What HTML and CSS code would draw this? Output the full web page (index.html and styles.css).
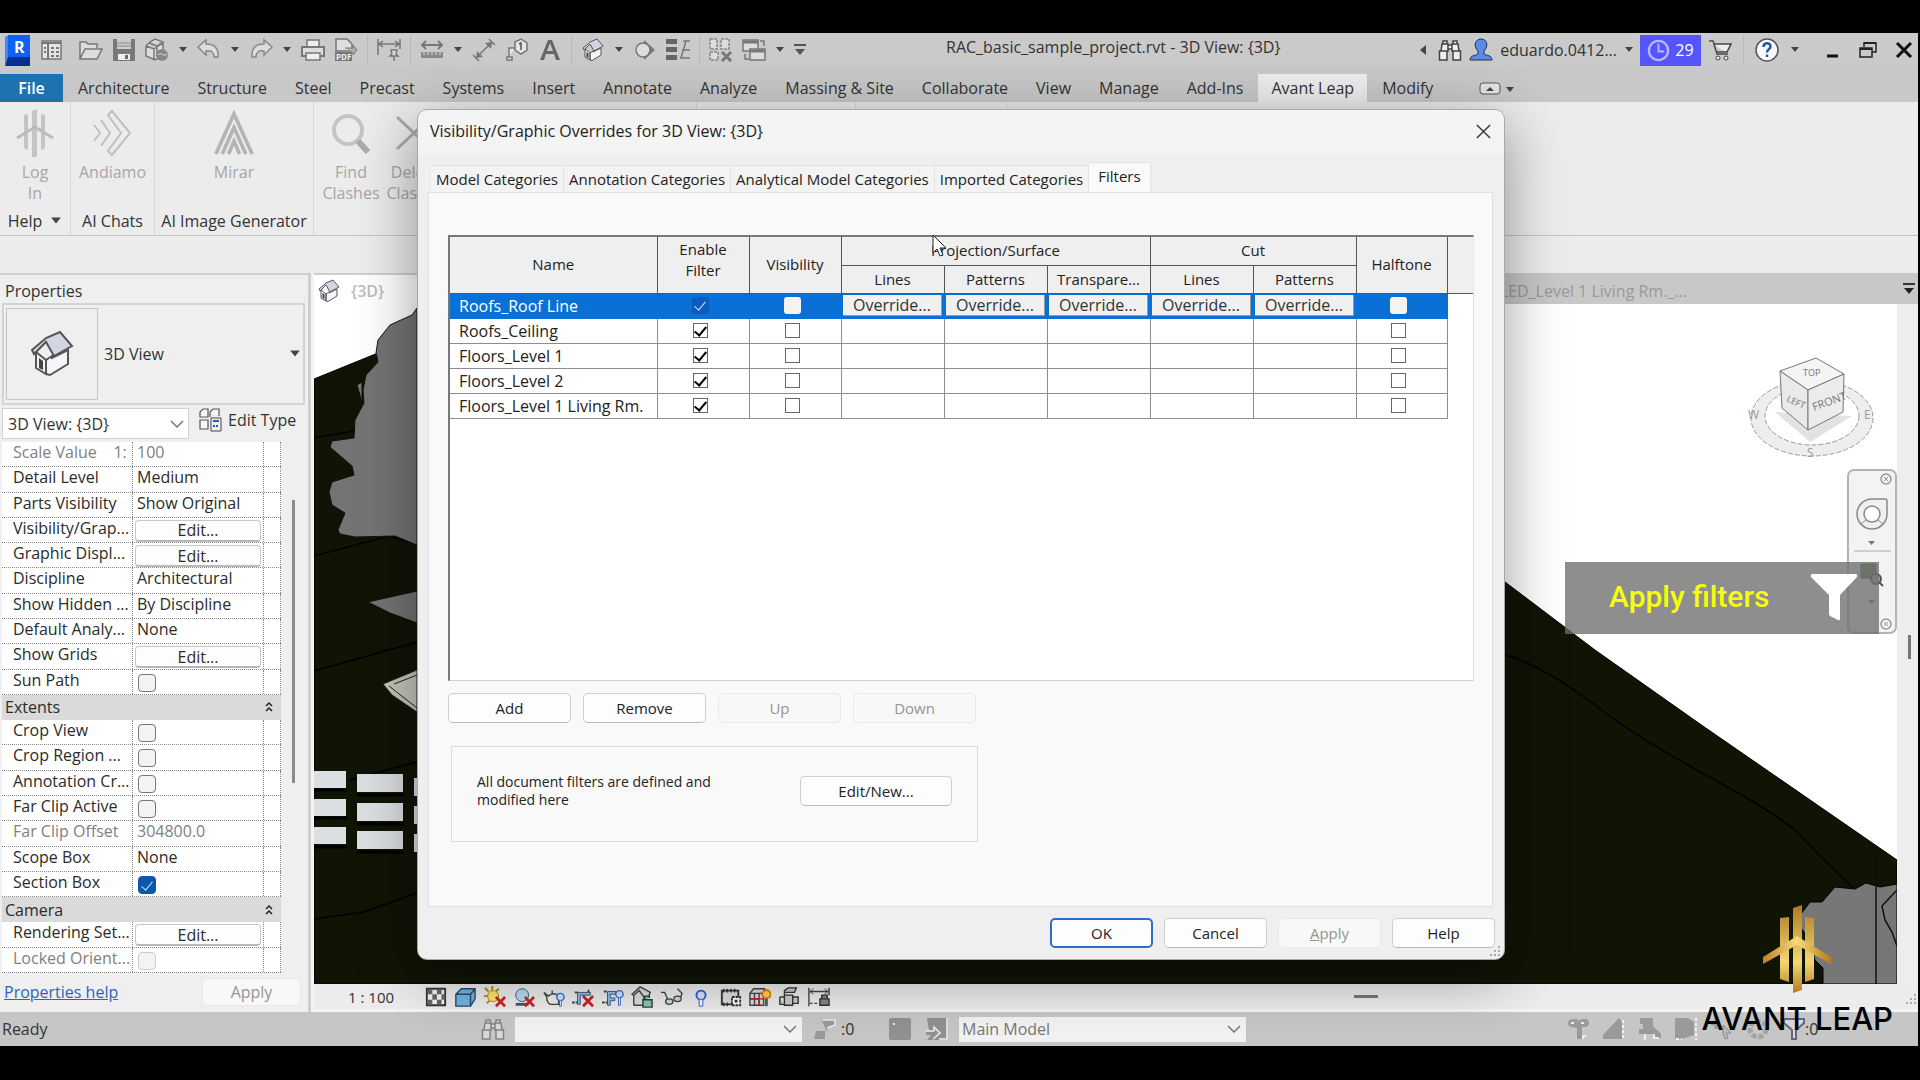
FILE: index.html
```html
<!DOCTYPE html>
<html lang="en">
<head>
    <meta charset="UTF-8">
    <meta name="viewport" content="width=device-width, initial-scale=1.0">
    <title>RAC_basic_sample_project.rvt - 3D View: {3D}</title>
    <link rel="stylesheet" href="styles.css">
</head>
<body>
    <!-- shared icons -->
    <svg class="defs" aria-hidden="true">
        <symbol id="i-house" viewBox="0 0 24 24">
            <path d="M4 11l5 4v7l-5-3zM9 15l3-2v1l8-4v7l-9 5.500-2-.5z" fill="#f4f5f8" stroke="#555" stroke-width="1"/>
            <path d="M2 10l7-6 7-3 6 7-9 5-4-7-6 6z" fill="#d3d6e2" stroke="#555" stroke-width="1"/>
            <path d="M5.500 14l2 1.500V20l-2-1z" fill="#444"/>
        </symbol>
        <symbol id="i-binoc" viewBox="0 0 24 24">
            <path d="M5 3h4v3H5zM15 3h4v3h-4zM4 6h6v7H3zM14 6h6l1 7h-7zM10 7h4v4h-4zM1.500 13H9v9H1.500zM15 13h7.500v9H15z" fill="#eee" stroke="#444" stroke-width="1.500"/>
        </symbol>
        <symbol id="i-caret" viewBox="0 0 10 6"><path d="M1 0h8L5 5z" fill="#444"/></symbol>
        <symbol id="i-chev" viewBox="0 0 14 8"><path d="M1 1l6 6 6-6" fill="none" stroke="#777" stroke-width="1.500"/></symbol>
        <symbol id="i-up" viewBox="0 0 8 12"><path d="M1 5l3-3 3 3M1 10l3-3 3 3" fill="none" stroke="#222" stroke-width="1.500"/></symbol>
    </svg>

    <div class="app">
        <header class="titlebar">
            <div class="quick">
                <svg class="logo" viewBox="0 0 27 31"><path d="M2 2l4-2v25l-4 5z" fill="#4a86f0"/><path d="M5 0h22v22H5z" fill="#0b62f5"/><path d="M5 22h22v9H2z" fill="#06308f"/><text x="11" y="18" class="logo-r">R</text></svg>
                <svg class="ic home" viewBox="0 0 24 24"><path d="M3 3h19v18H3z" fill="#e4e4e4" stroke="#777" stroke-width="1.500"/><path d="M3 5h19M9 5v16" stroke="#777" stroke-width="2"/><path d="M12 10h3M12 14h3M12 18h3M17 10h3M17 14h3M17 18h3M5 10h2M5 14h2" stroke="#777" stroke-width="2"/></svg>
                <svg class="ic" viewBox="0 0 24 24"><path d="M1 21V4h6l2 2h9v4M1 21l5-10h17l-5 10z" fill="#ddd" stroke="#777" stroke-width="1.500"/></svg>
                <svg class="ic" viewBox="0 0 24 24"><path d="M1 1h22v22H1z" fill="#777"/><path d="M5 1h14v10H5z" fill="#ccc"/><path d="M5 5h14M5 8h14" stroke="#888"/><path d="M6 16h12v6H6z" fill="#eee"/><path d="M13 17h3v4h-3z" fill="#666"/></svg>
                <svg class="ic" viewBox="0 0 24 24"><path d="M1 8l4-4 5-3 8 3v13l-8 5-9-4zM1 8l8 3 9-6M9 11v11M4 5l8 3 6-4M12 8v10" fill="#ddd" stroke="#777" stroke-width="1.500"/><circle cx="17" cy="17" r="6" fill="#888"/><path d="M13 17c3-4 6 3 9-1" stroke="#ddd" fill="none"/></svg>
                <svg class="caret"><use href="#i-caret"/></svg>
                <svg class="ic" viewBox="0 0 24 24"><path d="M1 9l8-7v4c9 0 13 5 12 13h-4c0-5-3-7-8-6v4z" fill="#ddd" stroke="#888" stroke-width="1.500"/></svg>
                <svg class="caret"><use href="#i-caret"/></svg>
                <svg class="ic" viewBox="0 0 24 24"><path d="M23 9l-8-7v4C6 6 2 11 3 19h4c0-5 3-7 8-6v4z" fill="#ddd" stroke="#888" stroke-width="1.500"/></svg>
                <svg class="caret"><use href="#i-caret"/></svg>
                <svg class="ic" viewBox="0 0 24 24"><path d="M6 9V2h12v7" fill="#eee" stroke="#777" stroke-width="1.500"/><path d="M1 9h22v9H1z" fill="#ddd" stroke="#777" stroke-width="2"/><path d="M5 15h14v7H5z" fill="#eee" stroke="#777" stroke-width="1.500"/></svg>
                <svg class="ic" viewBox="0 0 24 24"><path d="M2 1h11l5 5v7H2z" fill="#ddd" stroke="#777" stroke-width="1.500"/><path d="M11 10h8V7l4 5-4 5v-3" fill="#aaa" stroke="#777"/><path d="M1 14h17v9H1z" fill="#777"/><text x="2" y="22" class="pdf">PDF</text></svg>
                <i class="sep"></i>
                <svg class="ic" viewBox="0 0 24 24"><path d="M1 1v16M23 1v10M2 6h20M6 3L2 6l4 3M18 3l4 3-4 3" fill="none" stroke="#777" stroke-width="1.500"/><path d="M14 12h6l-1 4 2 2h-8l2-2zM17 18v5" fill="#ddd" stroke="#777" stroke-width="1.500"/></svg>
                <i class="sep"></i>
                <svg class="ic" viewBox="0 0 24 24"><path d="M2 7h20M6 3L2 7l4 4M18 3l4 4-4 4" fill="none" stroke="#777" stroke-width="2"/><path d="M1 14h22v6H1z" fill="#888"/><path d="M4 14v3M8 14v3M12 14v3M16 14v3M20 14v3" stroke="#ddd"/></svg>
                <svg class="caret"><use href="#i-caret"/></svg>
                <svg class="ic" viewBox="0 0 24 24"><path d="M4 20L20 4M17 1l6 6M1 17l6 6" stroke="#777" stroke-width="1.500"/><path d="M4 20l1-7 6 6zM20 4l-7 1 6 6z" fill="#777"/></svg>
                <svg class="ic" viewBox="0 0 24 24"><path d="M10 4l6-3 6 4v7l-6 4-6-4zM10 10H4v9M2 19h5v3H2z" fill="#e6e6e6" stroke="#777" stroke-width="1.500"/><path d="M14 6l2-1v7" fill="none" stroke="#555" stroke-width="1.500"/></svg>
                <svg class="ic" viewBox="0 0 24 24"><path d="M2 22L10 2h4l8 20h-4l-2-6H8l-2 6zM9 13h6l-3-8z" fill="#666" fill-rule="evenodd"/></svg>
                <i class="sep"></i>
                <svg class="ic"><use href="#i-house"/></svg>
                <svg class="caret"><use href="#i-caret"/></svg>
                <svg class="ic" viewBox="0 0 24 24"><path d="M11 2l11 10-11 10z" fill="#777"/><circle cx="10" cy="12" r="7" fill="#ddd" stroke="#777" stroke-width="1.500"/></svg>
                <svg class="ic" viewBox="0 0 24 24"><path d="M0 1h11v5H0zM0 9h11v5H0zM0 17h11v5H0z" fill="#666"/><path d="M15 20L20 3M17 3h7M16 12h8M14 20h10" stroke="#777" stroke-width="1.500"/></svg>
                <i class="sep"></i>
                <svg class="ic" viewBox="0 0 24 24"><path d="M1 1h7v10H1zM12 1h8v10h-8zM1 14h8v8H1z" fill="#ddd" stroke="#888" stroke-dasharray="3 1" stroke-width="1.500"/><path d="M13 14l9 9M22 14l-9 9" stroke="#777" stroke-width="3"/></svg>
                <svg class="ic" viewBox="0 0 24 24"><path d="M1 2h15v11H1zM8 11h15v11H8z" fill="#ddd" stroke="#777" stroke-width="1.500"/><path d="M1 4h15M8 13h15" stroke="#777" stroke-width="3"/><path d="M18 3h4v5M3 16v5h4" fill="none" stroke="#777" stroke-width="1.500"/></svg>
                <svg class="caret"><use href="#i-caret"/></svg>
                <svg class="more" viewBox="0 0 12 12"><path d="M0 1h12" stroke="#555" stroke-width="2"/><path d="M1 5h10l-5 6z" fill="#555"/></svg>
            </div>
            <div class="doc-title">RAC_basic_sample_project.rvt - 3D View: {3D}</div>
            <div class="account">
                <svg class="left" viewBox="0 0 6 10"><path d="M6 0v10L0 5z" fill="#444"/></svg>
                <svg class="ic"><use href="#i-binoc"/></svg>
                <svg class="ic" viewBox="0 0 24 24"><path d="M1 22c0-5 5-4 8-6v-3C4 8 6 1 12 1s8 7 3 12v3c3 2 8 1 8 6z" fill="#5b8bea" stroke="#234" stroke-width="1"/></svg>
                <span>eduardo.0412...</span>
                <svg class="caret"><use href="#i-caret"/></svg>
            </div>
            <div class="trial"><svg viewBox="0 0 24 24"><circle cx="12" cy="12" r="10" fill="none" stroke="#b9b6ff" stroke-width="2.500"/><path d="M12 5v8h6" fill="none" stroke="#b9b6ff" stroke-width="2"/></svg>29</div>
            <div class="wincontrols">
                <svg class="ic" viewBox="0 0 24 24"><path d="M1 3h4l4 13h11M6 6h17l-4 8H8" fill="#eee" stroke="#444" stroke-width="1.500"/><circle cx="10" cy="20" r="2" fill="#eee" stroke="#444"/><circle cx="18" cy="20" r="2" fill="#eee" stroke="#444"/></svg>
                <i class="sep"></i>
                <svg class="ic" viewBox="0 0 24 24"><circle cx="12" cy="12" r="11" fill="#fafafa" stroke="#555" stroke-width="1.500"/><path d="M8.500 9c0-5 7-5 7-.5 0 3-3.500 2.500-3.500 6M12 16.500v2.500" fill="none" stroke="#2456b0" stroke-width="2.500"/></svg>
                <svg class="caret"><use href="#i-caret"/></svg>
                <div class="wins">
                    <button class="win" aria-label="Minimize"><svg viewBox="0 0 18 18"><path d="M4 15h11" stroke="#111" stroke-width="3"/></svg></button>
                    <button class="win" aria-label="Restore"><svg viewBox="0 0 18 18"><path d="M5 6V2h12v9h-4M1 7h12v9H1z" fill="none" stroke="#222" stroke-width="1.500"/><path d="M5 2h12M1 8h12" stroke="#222" stroke-width="2"/></svg></button>
                    <button class="win" aria-label="Close"><svg viewBox="0 0 18 18"><path d="M2 2l14 14M16 2L2 16" stroke="#111" stroke-width="3"/></svg></button>
                </div>
            </div>
        </header>

        <nav class="tabs">
            <button class="tab file">File</button>
            <button class="tab">Architecture</button>
            <button class="tab">Structure</button>
            <button class="tab">Steel</button>
            <button class="tab">Precast</button>
            <button class="tab">Systems</button>
            <button class="tab">Insert</button>
            <button class="tab">Annotate</button>
            <button class="tab">Analyze</button>
            <button class="tab">Massing &amp; Site</button>
            <button class="tab">Collaborate</button>
            <button class="tab">View</button>
            <button class="tab">Manage</button>
            <button class="tab">Add-Ins</button>
            <button class="tab current">Avant Leap</button>
            <button class="tab">Modify</button>
            <svg class="cycle" viewBox="0 0 36 14"><rect x="1" y="1" width="20" height="11" rx="3" fill="#e4e4e4" stroke="#555"/><path d="M7 9h8l-4-4zM27 5h8l-4 5z" fill="#444"/></svg>
        </nav>

        <section class="ribbon">
            <div class="panel help">
                <button class="tool"><svg viewBox="0 0 40 48"><path d="M17 2l5-2v48h-5zM9 6l4-1v36l-4-2zM26 5l4 1v33l-4 2z" fill="#c4c4c4"/><path d="M2 29l18-11 18 11" fill="none" stroke="#bbb" stroke-width="3"/></svg>Log<br>In</button>
                <div class="panel-name">Help <svg class="caret big"><use href="#i-caret"/></svg></div>
            </div>
            <div class="panel chats">
                <button class="tool"><svg viewBox="0 0 40 48"><path d="M1 16l6 8-6 8M8 11l9 13-9 13" fill="none" stroke="#c0c0c0" stroke-width="2"/><path d="M15 6l4-4 18 22-18 22-4-4 13-18z" fill="none" stroke="#c0c0c0" stroke-width="2"/></svg>Andiamo</button>
                <div class="panel-name">AI Chats</div>
            </div>
            <div class="panel images">
                <button class="tool"><svg viewBox="0 0 44 48"><path d="M2 47L22 3l20 44M9 47l13-29 13 29M16 47l6-14 6 14" fill="none" stroke="#b4b4b4" stroke-width="4"/></svg>Mirar</button>
                <div class="panel-name">AI Image Generator</div>
            </div>
            <div class="panel clashes">
                <button class="tool"><svg viewBox="0 0 40 48"><circle cx="17" cy="21" r="14" fill="none" stroke="#c4c4c4" stroke-width="4"/><path d="M27 32l10 11" stroke="#aaa" stroke-width="6"/></svg>Find<br>Clashes</button>
                <button class="tool"><svg viewBox="0 0 40 48"><path d="M2 8l34 32M36 8L2 40" stroke="#aaa" stroke-width="3"/></svg>Delete<br>Clashes</button>
            </div>
            <div class="panel blank-a"></div>
            <div class="panel blank-b"></div>
        </section>
        <div class="options"></div>

        <main class="work">
            <aside class="props">
                <h2 class="props-title">Properties</h2>
                <div class="type">
                    <div class="thumb"><svg><use href="#i-house"/></svg></div>
                    <span>3D View</span>
                    <svg class="caret big"><use href="#i-caret"/></svg>
                </div>
                <div class="instance">
                    <div class="combo">
                        <select aria-label="Instance"><option>3D View: {3D}</option></select>
                        <svg class="chev"><use href="#i-chev"/></svg>
                    </div>
                    <button class="edit-type"><svg viewBox="0 0 24 24"><path d="M2 4l3-3h5v8H2zM12 4l3-3h6v7M2 12h8v9H2zM12 9V4" fill="#f6f6f6" stroke="#555" stroke-width="1.200"/><path d="M13 10h10v13H13z" fill="#f2f2f6" stroke="#444"/><path d="M15 13h6M15 18h2M18 18h2" stroke="#2a5aa8" stroke-width="2"/></svg>Edit Type</button>
                </div>
                <div class="grid-wrap">
                    <div class="grid">
                        <div class="row off"><span class="k">Scale Value &nbsp; &nbsp;1:</span><span class="v">100</span><i></i></div>
                        <div class="row"><span class="k">Detail Level</span><span class="v">Medium</span><i></i></div>
                        <div class="row"><span class="k">Parts Visibility</span><span class="v">Show Original</span><i></i></div>
                        <div class="row"><span class="k">Visibility/Grap...</span><span class="v"><button class="edit">Edit...</button></span><i></i></div>
                        <div class="row"><span class="k">Graphic Displ...</span><span class="v"><button class="edit">Edit...</button></span><i></i></div>
                        <div class="row"><span class="k">Discipline</span><span class="v">Architectural</span><i></i></div>
                        <div class="row"><span class="k">Show Hidden ...</span><span class="v">By Discipline</span><i></i></div>
                        <div class="row"><span class="k">Default Analy...</span><span class="v">None</span><i></i></div>
                        <div class="row"><span class="k">Show Grids</span><span class="v"><button class="edit">Edit...</button></span><i></i></div>
                        <div class="row"><label class="k" for="sun">Sun Path</label><span class="v"><input type="checkbox" class="soft" id="sun"></span><i></i></div>
                        <div class="row group"><span>Extents</span><svg class="up"><use href="#i-up"/></svg></div>
                        <div class="row"><label class="k" for="crop">Crop View</label><span class="v"><input type="checkbox" class="soft" id="crop"></span><i></i></div>
                        <div class="row"><label class="k" for="region">Crop Region ...</label><span class="v"><input type="checkbox" class="soft" id="region"></span><i></i></div>
                        <div class="row"><label class="k" for="anno">Annotation Cr...</label><span class="v"><input type="checkbox" class="soft" id="anno"></span><i></i></div>
                        <div class="row"><label class="k" for="far">Far Clip Active</label><span class="v"><input type="checkbox" class="soft" id="far"></span><i></i></div>
                        <div class="row off"><span class="k">Far Clip Offset</span><span class="v">304800.0</span><i></i></div>
                        <div class="row"><span class="k">Scope Box</span><span class="v">None</span><i></i></div>
                        <div class="row"><label class="k" for="section">Section Box</label><span class="v"><input type="checkbox" class="soft" id="section" checked></span><i></i></div>
                        <div class="row group"><span>Camera</span><svg class="up"><use href="#i-up"/></svg></div>
                        <div class="row"><span class="k">Rendering Set...</span><span class="v"><button class="edit">Edit...</button></span><i></i></div>
                        <div class="row off"><label class="k" for="locked">Locked Orient...</label><span class="v"><input type="checkbox" class="soft" id="locked" disabled></span><i></i></div>
                    </div>
                    <div class="thumb-bar"></div>
                </div>
                <div class="props-foot">
                    <a href="#">Properties help</a>
                    <button class="btn" disabled>Apply</button>
                </div>
            </aside>

            <section class="view">
                <div class="doctabs">
                    <div class="doctab"><svg class="ic"><use href="#i-house"/></svg><span>{3D}</span></div>
                    <div class="doctab-off">LED_Level 1 Living Rm._...</div>
                    <svg class="more" viewBox="0 0 12 12"><path d="M0 1h12" stroke="#333" stroke-width="2"/><path d="M1 5h10l-5 6z" fill="#222"/></svg>
                </div>
                <div class="canvas-row">
                    <div class="canvas">
                        <svg class="scene" viewBox="314 304 1583 680" preserveAspectRatio="none">
                            <path d="M314 304h1583v680H314z" fill="#fff"/>
                            <path d="M314 379L378 353 900 320 1420 520 1505 582 1595 650 1700 724 1897 860V984H314z" fill="#101405" stroke="#000"/>
                            <path d="M314 438l40-7M314 556l75-20 28 8M314 671l103-29M314 919l50-7 53-19M350 780l67-18M1505 655c20 5 50 20 90 50 70 55 150 85 200 125l25 26 33 32" fill="none" stroke="#000" stroke-width="1.500"/>
                            <path d="M417 308l-5 7-22 10-12 15-2 13 2 9-12 13-3 15 1 13-9 17-1 18-22 3-2 6 22 19 2 9-22 7-3 10 3 13 13 8-7 17 2 4 15 3 40-1 22 9zM357 385l5-3v20zM368 602l49-11v32l-27-10z" fill="#747474" stroke="#111"/>
                            <path d="M383 684l34-14v42l-25-17z" fill="#c5c9ba" stroke="#222"/>
                            <path d="M389 686l28 22M394 684l23-9" stroke="#222"/>
                            <path d="M314 771h32v17h-32zM314 799h32v17h-32zM314 827h32v17h-32zM357 774h46v18h-46zM357 803h46v18h-46zM357 831h46v18h-46zM414 778h6v18h-6zM414 806h6v18h-6zM414 834h6v18h-6z" fill="#dcdfe2"/>
                            <path d="M314 790h33M314 818h33M314 847h33M357 795h47M357 824h47M357 852h47" stroke="#000" stroke-width="3"/>
                            <path d="M1801 914l9-12 12 0 13-15 20 2 11-6 14 4 17-3v100h-74l0-16-8-8-5-20-9-12z" fill="#777" stroke="#000"/>
                            <path d="M1876 855v129M1897 890l-15 16 3 14 7 12 5 14" fill="none" stroke="#111" stroke-width="1.500"/>
                        </svg>
                        <svg class="cube" viewBox="1744 354 134 108">
                            <ellipse cx="1812" cy="418" rx="61" ry="38" fill="#eee" stroke="#999" stroke-dasharray="5 2"/>
                            <ellipse cx="1812" cy="416" rx="47" ry="29" fill="#fff" stroke="#999" stroke-dasharray="5 2"/>
                            <path d="M1775 412l35 30 42-26z" fill="#e2e2e2"/>
                            <path d="M1780 371l36-13 28 16-36 16z" fill="#f4f4f4" stroke="#777"/>
                            <path d="M1780 371l28 19v40l-26-22z" fill="#e9e9e9" stroke="#777"/>
                            <path d="M1808 390l36-16-1 38-35 18z" fill="#ececec" stroke="#777"/>
                            <text x="1803" y="376" class="face">TOP</text>
                            <text x="1786" y="401" class="face" transform="rotate(24 1786 401)">LEFT</text>
                            <text x="1814" y="411" class="face front" transform="rotate(-20 1814 411)">FRONT</text>
                            <text x="1748" y="419" class="face dir">W</text>
                            <text x="1864" y="419" class="face dir">E</text>
                            <text x="1807" y="457" class="face dir">S</text>
                        </svg>
                        <div class="navbar">
                            <svg viewBox="2 2 46 161">
                                <circle cx="39" cy="10" r="5" fill="none" stroke="#999" stroke-width="1.500"/><path d="M37 8l4 4M41 8l-4 4" stroke="#999"/>
                                <path d="M25 30h13q2 0 2 2v13a15 15 0 1 1-15-15z" fill="#f0f0f0" stroke="#888" stroke-width="1.500"/><circle cx="25" cy="45" r="8" fill="#fff" stroke="#888" stroke-width="1.500"/><path d="M14 55l5-4M36 55l-5-4" stroke="#888"/>
                                <path d="M21 72h7l-3.500 4zM21 131h7l-3.500 4z" fill="#777"/><path d="M7 82h37" stroke="#aaa"/>
                                <path d="M14 95h15v14H14z" fill="#5f8a4f" stroke="#555"/><circle cx="29" cy="110" r="5" fill="#aaa" stroke="#555" stroke-width="2"/><path d="M32 113l4 4" stroke="#555" stroke-width="2"/>
                                <circle cx="39" cy="155" r="5" fill="none" stroke="#999" stroke-width="1.500"/><path d="M37 154h4M37 156h4" stroke="#999"/>
                            </svg>
                        </div>
                        <div class="banner">
                            <span>Apply filters</span>
                            <svg viewBox="0 0 48 48"><path d="M2 1h44q2 1 1 3L30 22v24q0 2-2 1l-8-4q-1-1-1-2V22L1 4Q0 2 2 1z" fill="#fff"/></svg>
                        </div>
                    </div>
                    <div class="vscroll"></div>
                </div>
                <div class="viewbar">
                    <span class="scale">1 : 100</span>
                    <div class="view-icons">
                        <svg viewBox="0 0 24 24"><path d="M2 3h20v18H2z" fill="#f4f4f4" stroke="#333" stroke-width="2"/><path d="M3 4h5v5H3zM13 4h5v5h-5zM8 9h5v6H8zM18 9h4v6h-4zM3 15h5v5H3zM13 15h5v5h-5z" fill="#666"/></svg>
                        <svg viewBox="0 0 24 24"><path d="M2 9l6-6h15v11l-5 8H2zM2 9h16v13M18 9l5-6" fill="#72b4e0" stroke="#234b6b" stroke-width="1.500"/></svg>
                        <svg viewBox="0 0 24 24"><path d="M9 0v5M1 2l4 4M0 11h4M3 19l3-3M16 3l-3 3" stroke="#a80" stroke-width="2"/><circle cx="10" cy="11" r="6" fill="#ffe36b" stroke="#a80"/><path d="M13 12l10 10M23 12L13 22" stroke="#c22" stroke-width="3"/></svg>
                        <svg viewBox="0 0 24 24"><circle cx="10" cy="10" r="7" fill="#b8dcf2" stroke="#357"/><path d="M3 20h14" stroke="#456" stroke-width="3"/><path d="M13 12l10 10M23 12L13 22" stroke="#c22" stroke-width="3"/></svg>
                        <svg viewBox="0 0 24 24"><path d="M1 7l5 4q5-5 11 0v9H8q-4-2-4-8zM10 8V5" fill="#eee" stroke="#444" stroke-width="1.500"/><circle cx="19" cy="12" r="4" fill="#cfe3ff" stroke="#36c" stroke-width="1.500"/><path d="M18 16v6h2v-6" stroke="#36c" fill="#fff"/></svg>
                        <svg viewBox="0 0 24 24"><path d="M6 7h14v3H9v10H6z" fill="#8fc0e6" stroke="#357"/><path d="M0 18h6M18 7V3M3 7h3" fill="none" stroke="#444" stroke-width="2" stroke-dasharray="3 1"/><path d="M12 11l11 11M23 11L12 22" stroke="#c22" stroke-width="3"/></svg>
                        <svg viewBox="0 0 24 24"><path d="M6 6h9v3H9v4h5v3H9v5H6z" fill="#8fc0e6" stroke="#357"/><path d="M0 18h6M2 6h4" stroke="#444" stroke-width="2" stroke-dasharray="3 1"/><circle cx="19" cy="9" r="4" fill="#cfe3ff" stroke="#36c" stroke-width="1.500"/><path d="M18 13v8h2v-8" stroke="#36c" fill="#fff"/></svg>
                        <svg viewBox="0 0 24 24"><path d="M3 21V10L1 9l9-8 11 6-2 5M3 10l6-5 5 7v9H3" fill="#ddd" stroke="#444" stroke-width="1.500"/><path d="M13 15h10v8H13zM15 15v-4h5v2" fill="#8fc2b0" stroke="#243" stroke-width="1.500"/></svg>
                        <svg viewBox="0 0 24 24"><path d="M0 7h4l4 9M14 16l7-3 2-5-5-5" fill="none" stroke="#444" stroke-width="1.500"/><ellipse cx="9" cy="17" rx="4" ry="3" fill="#bfe0d0" stroke="#444" stroke-width="1.500"/><ellipse cx="18" cy="14" rx="4" ry="3" fill="#bfe0d0" stroke="#444" stroke-width="1.500"/></svg>
                        <svg viewBox="0 0 24 24"><circle cx="12" cy="10" r="5" fill="#cfe3ff" stroke="#2b5bd0" stroke-width="2"/><path d="M10 15v7h4v-7" stroke="#2b5bd0" fill="#fff"/></svg>
                        <svg viewBox="0 0 24 24"><path d="M2 5h18v15H2z" fill="#ddd" stroke="#333" stroke-width="2"/><path d="M4 3v4M8 3v4M12 3v4M16 3v4M4 18v4M8 18v4" stroke="#333" stroke-width="1.500"/><path d="M13 12h9v9h-9z" fill="#fff" stroke="#333" stroke-width="2" stroke-dasharray="3 1"/><path d="M16 15h3v3h-3z" fill="#333"/></svg>
                        <svg viewBox="0 0 24 24"><path d="M1 8h15v13H1zM6 8v13M11 8v13M1 14h15M1 8l4-5h12l-1 5" fill="#ddd" stroke="#444" stroke-width="1.500"/><path d="M1 14h10v7" stroke="#c22" stroke-width="2" fill="none"/><circle cx="19" cy="9" r="4.500" fill="#ffd24d" stroke="#d70" stroke-width="2"/><path d="M19 14v8" stroke="#555" stroke-width="3"/></svg>
                        <svg viewBox="0 0 24 24"><path d="M7 10h9v11H7zM2 12h5M2 12v8h5M16 12h6v7h-6M7 10V5l4-3h9l-2 5H8" fill="#ccc" stroke="#333" stroke-width="1.500"/></svg>
                        <svg viewBox="0 0 24 24"><path d="M1 2v20M23 2v8M2 6h20" stroke="#444" stroke-width="1.500"/><path d="M6 3L2 6l4 3M18 3l4 3-4 3" fill="none" stroke="#444"/><path d="M2 19h10" stroke="#444" stroke-width="1.500" stroke-dasharray="3 2"/><path d="M13 14h10v7H13zM15 14v-4h6v4" fill="#888" stroke="#333" stroke-width="1.500"/></svg>
                    </div>
                    <div class="hthumb"></div>
                    <svg class="grip" viewBox="0 0 12 12"><path d="M8 0h2v2H8zM4 4h2v2H4zM8 4h2v2H8zM0 8h2v2H0zM4 8h2v2H4zM8 8h2v2H8z" fill="#aaa"/></svg>
                </div>
            </section>
        </main>

        <footer class="status">
            <span class="ready">Ready</span>
            <svg class="ic faded"><use href="#i-binoc"/></svg>
            <div class="combo workset">
                <select aria-label="Workset" disabled><option></option></select>
                <svg class="chev"><use href="#i-chev"/></svg>
            </div>
            <svg class="ic" viewBox="0 0 24 24"><path d="M8 2h14v6l-7 3-1 4M3 14h9v8H1z" fill="#999"/><path d="M9 3h13v5l-8 3" fill="none" stroke="#eee" stroke-width="1.500"/></svg>
            <span class="count">:0</span>
            <svg class="ic box" viewBox="0 0 24 24"><rect x="1" y="1" width="22" height="22" rx="2" fill="#919191"/><path d="M5 7h2" stroke="#eee" stroke-width="2"/></svg>
            <svg class="ic" viewBox="0 0 24 24"><path d="M2 1h20v22H2l4-5H1v-4h3z" fill="#919191"/><path d="M1 14h8v-4l6 6-7 6M22 1v21h-8" fill="none" stroke="#eee" stroke-width="1.500"/></svg>
            <div class="combo model">
                <select aria-label="Design option" disabled><option>Main Model</option></select>
                <svg class="chev"><use href="#i-chev"/></svg>
            </div>
            <div class="toggles">
                <svg viewBox="0 0 24 24"><path d="M2 6q0-4 5-4h4l2 2 2-2h4q4 0 4 4t-4 4h-3v12h-5V11l-6-1q-3-1-3-4z" fill="#9a9a9a"/><path d="M5 6h3M15 6h3M17 22v-3h3" stroke="#eee" stroke-width="2" fill="none"/></svg>
                <svg viewBox="0 0 24 24"><path d="M1 18L17 1l3 4v17H1z" fill="#9a9a9a"/><path d="M21 3v19" stroke="#f2f2f2" stroke-width="2" stroke-dasharray="3 2"/></svg>
                <svg viewBox="0 0 24 24"><path d="M2 1h13v8l8 8v4h-8v-4H1v-5h4V7H2z" fill="#9a9a9a"/><path d="M7 17v6M16 17v4h5" stroke="#eee" stroke-width="2" fill="none"/></svg>
                <svg viewBox="0 0 24 24"><path d="M1 1h13l6 4v13L8 22H1z" fill="#9a9a9a"/><path d="M22 1v22M2 22h6" stroke="#f2f2f2" stroke-width="2" stroke-dasharray="3 2" fill="none"/></svg>
                <svg viewBox="0 0 24 24"><path d="M1 7h9M6 2v10" stroke="#999" stroke-width="3"/><path d="M13 8l8 8h-5l2 5-3 1-2-5z" fill="#bbb" stroke="#888"/></svg>
                <svg viewBox="0 0 24 24"><circle cx="12" cy="12" r="8" fill="none" stroke="#a4a4a4" stroke-width="5" stroke-dasharray="5 2"/></svg>
                <svg viewBox="0 0 24 24"><path d="M2 2h20v4l-8 7v9h-4v-9L2 6z" fill="#d8d8e4" stroke="#667" stroke-width="2"/></svg>
                <span class="count">:0</span>
            </div>
        </footer>

        <div class="brand">
            <svg viewBox="0 0 70 88">
                <defs>
                    <linearGradient id="gold" x1="0" y1="0" x2="0" y2="1"><stop offset="0" stop-color="#b07a1c"/><stop offset=".65" stop-color="#f4d774"/><stop offset="1" stop-color="#b57d1e"/></linearGradient>
                    <linearGradient id="goldr"><stop offset="0" stop-color="#b9832a"/><stop offset=".5" stop-color="#f6da78"/><stop offset="1" stop-color="#b57d1e"/></linearGradient>
                </defs>
                <path d="M18 13l9-1v65l-9-3zM31 3l9-3v85l-9 3zM43 12l9 1v61l-9 3z" fill="url(#gold)"/>
                <path d="M1 52L35 31l34 21v7L35 40 1 59z" fill="url(#goldr)"/>
            </svg>
            <span>AVANT LEAP</span>
        </div>

        <div class="dialog" role="dialog" aria-labelledby="dlg-title">
            <div class="dlg-head">
                <h1 id="dlg-title">Visibility/Graphic Overrides for 3D View: {3D}</h1>
                <button class="dlg-close" aria-label="Close"><svg viewBox="0 0 16 16"><path d="M1 1l14 14M15 1L1 15" stroke="#333" stroke-width="1.500"/></svg></button>
            </div>
            <div class="dlg-tabs">
                <button>Model Categories</button>
                <button>Annotation Categories</button>
                <button>Analytical Model Categories</button>
                <button>Imported Categories</button>
                <button class="active">Filters</button>
            </div>
            <div class="page">
                <div class="list">
                    <table>
                        <colgroup><col class="c-name"><col class="c-flag"><col class="c-flag"><col class="c-over"><col class="c-over"><col class="c-over"><col class="c-over"><col class="c-over"><col class="c-half"><col></colgroup>
                        <thead>
                            <tr><th rowspan="2">Name</th><th rowspan="2" class="two">Enable<br>Filter</th><th rowspan="2">Visibility</th><th colspan="3">Projection/Surface</th><th colspan="2">Cut</th><th rowspan="2">Halftone</th><th rowspan="2" class="fill"></th></tr>
                            <tr><th>Lines</th><th>Patterns</th><th>Transpare...</th><th>Lines</th><th>Patterns</th></tr>
                        </thead>
                        <tbody>
                            <tr class="sel"><td>Roofs_Roof Line</td><td class="flag"><input type="checkbox" aria-label="Enable Roofs_Roof Line" checked></td><td class="flag"><input type="checkbox" aria-label="Visibility"></td><td><button>Override...</button></td><td><button>Override...</button></td><td><button>Override...</button></td><td><button>Override...</button></td><td><button>Override...</button></td><td class="flag"><input type="checkbox" aria-label="Halftone"></td><td class="fill"></td></tr>
                            <tr><td>Roofs_Ceiling</td><td class="flag"><input type="checkbox" aria-label="Enable Roofs_Ceiling" checked></td><td class="flag"><input type="checkbox" aria-label="Visibility"></td><td></td><td></td><td></td><td></td><td></td><td class="flag"><input type="checkbox" aria-label="Halftone"></td><td class="fill"></td></tr>
                            <tr><td>Floors_Level 1</td><td class="flag"><input type="checkbox" aria-label="Enable Floors_Level 1" checked></td><td class="flag"><input type="checkbox" aria-label="Visibility"></td><td></td><td></td><td></td><td></td><td></td><td class="flag"><input type="checkbox" aria-label="Halftone"></td><td class="fill"></td></tr>
                            <tr><td>Floors_Level 2</td><td class="flag"><input type="checkbox" aria-label="Enable Floors_Level 2" checked></td><td class="flag"><input type="checkbox" aria-label="Visibility"></td><td></td><td></td><td></td><td></td><td></td><td class="flag"><input type="checkbox" aria-label="Halftone"></td><td class="fill"></td></tr>
                            <tr><td>Floors_Level 1 Living Rm.</td><td class="flag"><input type="checkbox" aria-label="Enable Floors_Level 1 Living Rm." checked></td><td class="flag"><input type="checkbox" aria-label="Visibility"></td><td></td><td></td><td></td><td></td><td></td><td class="flag"><input type="checkbox" aria-label="Halftone"></td><td class="fill"></td></tr>
                        </tbody>
                    </table>
                </div>
                <div class="list-btns">
                    <button class="btn">Add</button>
                    <button class="btn">Remove</button>
                    <button class="btn" disabled>Up</button>
                    <button class="btn" disabled>Down</button>
                </div>
                <div class="doc-filters">
                    <p>All document filters are defined and modified here</p>
                    <button class="btn">Edit/New...</button>
                </div>
            </div>
            <div class="dlg-foot">
                <button class="btn primary">OK</button>
                <button class="btn">Cancel</button>
                <button class="btn" disabled><u>A</u>pply</button>
                <button class="btn">Help</button>
            </div>
            <svg class="grip" viewBox="0 0 12 12"><path d="M8 0h2v2H8zM4 4h2v2H4zM8 4h2v2H8zM0 8h2v2H0zM4 8h2v2H4zM8 8h2v2H8z" fill="#aaa"/></svg>
        </div>

        <svg class="cursor" viewBox="0 0 16 24"><path d="M1 1v18l4-4 3 7 3-1-3-7h6z" fill="#fff" stroke="#222"/></svg>
    </div>
</body>
</html>
```
FILE: styles.css
```css
* {
    box-sizing: border-box;
}
body {
    margin: 0;
    background: #000;
    color: #333;
    font-family: "Open Sans", "Noto Sans", sans-serif;
    font-size: 16px;
    line-height: 20px;
}
button, select {
    font: inherit;
    color: inherit;
}
button {
    padding: 0;
    border: none;
    background: none;
    white-space: nowrap;
}
svg {
    display: block;
    flex: none;
}
h1, h2, p {
    margin: 0;
    font-size: inherit;
    font-weight: normal;
}
.defs {
    position: absolute;
    width: 0;
    height: 0;
}
.app {
    position: relative;
    display: flex;
    flex-direction: column;
    height: 100vh;
    padding: 33px 2px 34px 0;
    overflow: hidden;
}

/* title bar */
.titlebar {
    display: flex;
    align-items: center;
    height: 34px;
    background: #cacaca;
}
.quick, .account, .wincontrols {
    display: flex;
    align-items: center;
    gap: 9px;
}
.quick {
    width: 807px;
    padding-left: 3px;
}
.logo {
    width: 27px;
    height: 31px;
}
.logo-r {
    fill: #fff;
    font-size: 16px;
    font-weight: bold;
}
.pdf {
    fill: #eee;
    font-size: 8px;
    font-weight: bold;
}
.ic {
    width: 24px;
    height: 24px;
}
.home {
    margin-right: 7px;
}
.caret {
    width: 10px;
    height: 6px;
}
.caret.big {
    width: 12px;
    height: 8px;
}
.more {
    width: 12px;
    height: 12px;
}
.sep {
    width: 1px;
    height: 30px;
    background: #b8b8b8;
}
.doc-title {
    flex: 1;
    padding: 0 0 6px 139px;
    white-space: nowrap;
}
.left {
    width: 6px;
    height: 10px;
}
.account {
    gap: 7px;
    margin-right: 6px;
}
.account .left {
    margin-right: 5px;
}
.trial {
    display: flex;
    align-items: center;
    justify-content: center;
    gap: 5px;
    width: 61px;
    height: 31px;
    background: #5654fb;
    color: #fff;
}
.trial svg {
    width: 23px;
    height: 23px;
}
.wincontrols {
    width: 217px;
    padding: 0 2px 0 7px;
    gap: 11px;
}
.wins {
    display: flex;
    gap: 12px;
    margin-left: auto;
}
.win {
    display: flex;
    justify-content: center;
    width: 24px;
}
.win svg {
    width: 18px;
    height: 18px;
}

/* ribbon */
.tabs {
    display: flex;
    align-items: flex-end;
    gap: 2px;
    height: 35px;
    background: #c8c8c8;
}
.tab {
    height: 28px;
    padding: 0 13px;
}
.tab.file {
    width: 63px;
    background: #1f72b0;
    color: #fff;
    font-weight: 600;
}
.tab.current {
    background: #ededed;
}
.cycle {
    width: 36px;
    height: 14px;
    margin: 0 0 6px 31px;
}
.ribbon {
    display: flex;
    height: 134px;
    background: #ececec;
    border-bottom: 1px solid #c4c4c4;
}
.panel {
    display: flex;
    flex-wrap: wrap;
    justify-content: center;
    align-content: space-between;
    padding: 7px 0 4px;
    border-right: 1px solid #d6d6d6;
}
.help {
    width: 71px;
}
.chats {
    width: 84px;
}
.images {
    width: 159px;
}
.clashes {
    justify-content: flex-start;
    width: 383px;
    padding-left: 5px;
}
.blank-a {
    width: 159px;
}
.blank-b {
    width: 151px;
}
.tool {
    display: flex;
    flex-direction: column;
    align-items: center;
    gap: 5px;
    min-width: 64px;
    line-height: 21px;
    color: #a6a6a6;
}
.tool svg {
    width: 40px;
    height: 48px;
}
.panel-name {
    display: flex;
    align-items: center;
    justify-content: center;
    gap: 8px;
    width: 100%;
    white-space: nowrap;
}
.options {
    height: 37px;
    background: #ececec;
}
.work {
    flex: 1;
    display: flex;
    min-height: 0;
    background: #efefef;
}

/* properties palette */
.props {
    display: flex;
    flex-direction: column;
    width: 311px;
    padding: 6px 0 6px 2px;
    border-right: 3px solid #cfcfcf;
    border-top: 2px solid #cfcfcf;
}
.props-title {
    padding-left: 3px;
}
.type {
    display: flex;
    align-items: center;
    gap: 6px;
    height: 102px;
    margin: 2px 3px 0 0;
    padding: 0 2px;
    border: 2px solid #d4d4d4;
}
.type .caret {
    margin-left: auto;
}
.thumb {
    display: flex;
    align-items: center;
    justify-content: center;
    width: 92px;
    height: 92px;
    border: 1px solid #c6c6c6;
}
.thumb svg {
    width: 48px;
    height: 48px;
}
.instance {
    display: flex;
    align-items: flex-start;
    gap: 9px;
    height: 37px;
    padding-top: 3px;
}
.combo {
    position: relative;
    width: 187px;
}
.combo select {
    display: block;
    appearance: none;
    width: 100%;
    height: 31px;
    padding: 0 5px;
    border: 1px solid #d2d2d2;
    border-radius: 0;
    background: #fff;
    opacity: 1;
}
.chev {
    position: absolute;
    right: 5px;
    top: 50%;
    width: 14px;
    height: 8px;
    margin-top: -4px;
}
.edit-type {
    display: flex;
    align-items: center;
    gap: 6px;
}
.edit-type svg {
    width: 24px;
    height: 24px;
}
.grid-wrap {
    flex: 1;
    display: flex;
    min-height: 0;
}
.grid {
    display: grid;
    grid-auto-rows: 1fr;
    width: 279px;
    background: #fff;
    color: #2b2b2b;
}
.row {
    display: grid;
    grid-template-columns: 131px 131px 17px;
    min-height: 0;
    border-bottom: 1px dotted #888;
}
.row > * {
    border-right: 1px dotted #888;
}
.k {
    padding-left: 11px;
    white-space: nowrap;
    overflow: hidden;
}
.v {
    padding-left: 4px;
}
.off {
    color: #808080;
}
.row.group {
    display: flex;
    align-items: center;
    justify-content: space-between;
    padding: 0 8px 0 3px;
    border: none;
    background: #dadada;
}
.row.group > * {
    border: none;
}
.up {
    width: 8px;
    height: 12px;
}
.edit {
    display: block;
    width: 126px;
    height: 22px;
    margin: 2px 0 0 -2px;
    border: 1px solid #c8c8c8;
    border-bottom: 2px solid #b8b8b8;
    border-radius: 4px;
    background: #fdfdfd;
    line-height: 18px;
}
.thumb-bar {
    width: 3px;
    height: 283px;
    margin: 58px 0 0 11px;
    background: #8a8a8a;
}
input[type="checkbox"] {
    appearance: none;
    display: block;
    width: 15px;
    height: 15px;
    margin: 0 auto;
    border: 1px solid #666;
    background: #fff;
}
input[type="checkbox"]:checked::before {
    content: "";
    display: block;
    width: 5px;
    height: 10px;
    margin: 0 auto;
    border: solid #000;
    border-width: 0 2px 2px 0;
    transform: rotate(40deg);
}
input[type="checkbox"].soft {
    width: 18px;
    height: 18px;
    margin: 4px 0 0 1px;
    border: 1px solid #777;
    border-radius: 4px;
    background: #f3f3f3;
}
input[type="checkbox"].soft:checked {
    border-color: #0a57ab;
    background: #0a57ab;
}
input[type="checkbox"].soft:checked::before {
    margin-top: 2px;
    border-color: #cfe0f5;
    border-width: 0 1px 1px 0;
}
input[type="checkbox"].soft:disabled {
    border-color: #ccc;
}
.props-foot {
    display: flex;
    align-items: center;
    justify-content: space-between;
    padding: 5px 7px 0 2px;
}
.props-foot a {
    color: #2f62c0;
}
.btn {
    height: 30px;
    border: 1px solid #cfcfcf;
    border-bottom-color: #b9b9b9;
    border-radius: 5px;
    background: #fdfdfd;
    color: #222;
}
.btn:disabled {
    border-color: #e9e9e9;
    background: #f8f8f8;
    color: #949494;
}
.props-foot .btn {
    width: 99px;
    height: 28px;
}

/* drawing area */
.view {
    flex: 1;
    display: flex;
    flex-direction: column;
    min-width: 0;
    border-left: 3px solid #f4f4f4;
}
.doctabs {
    display: flex;
    align-items: center;
    height: 31px;
    padding-right: 3px;
    background: #c8c8c8;
}
.doctab {
    display: flex;
    align-items: center;
    gap: 10px;
    width: 780px;
    height: 31px;
    padding: 2px 0 0 3px;
    border-top: 2px solid #cfcfcf;
    background: #fff;
    color: #bdbdbd;
    font-weight: 600;
}
.doctab-off {
    margin-left: auto;
    padding: 4px 216px 0 0;
    color: #999;
}
.canvas-row {
    flex: 1;
    display: flex;
    min-height: 0;
}
.canvas {
    position: relative;
    flex: 1;
    min-width: 0;
}
.scene {
    width: 100%;
    height: 100%;
}
.cube {
    position: absolute;
    right: 19px;
    top: 50px;
    width: 134px;
    height: 108px;
}
.face {
    fill: #777;
    font-size: 9px;
}
.front {
    font-size: 11px;
}
.dir {
    fill: #999;
    font-size: 12px;
}
.navbar {
    position: absolute;
    right: 0;
    top: 165px;
    width: 50px;
    height: 165px;
    border: 2px solid #b4b4b4;
    border-radius: 7px;
    background: #f3f3f3;
}
.navbar svg {
    width: 46px;
    height: 161px;
}
.banner {
    position: absolute;
    right: 18px;
    top: 258px;
    display: flex;
    align-items: center;
    justify-content: space-between;
    width: 314px;
    height: 72px;
    padding: 0 21px 3px 44px;
    background: rgba(110, 110, 110, .78);
    color: #f6ff0a;
    font: 500 30px Roboto, sans-serif;
}
.banner svg {
    width: 48px;
    height: 48px;
}
.vscroll {
    width: 21px;
    padding: 331px 0 0 11px;
    background: #ededed;
}
.vscroll::before {
    content: "";
    display: block;
    width: 3px;
    height: 24px;
    background: #777;
}
.viewbar {
    display: flex;
    align-items: center;
    height: 28px;
    border-bottom: 3px solid #f6f6f6;
    background: #ececec;
}
.scale {
    width: 111px;
    padding-left: 34px;
    font-size: 15px;
}
.view-icons {
    display: flex;
    justify-content: space-between;
    width: 405px;
}
.view-icons svg {
    width: 22px;
    height: 22px;
}
.hthumb {
    width: 24px;
    height: 3px;
    margin-left: 524px;
    background: #777;
}
.viewbar .grip {
    margin: 6px 0 0 auto;
}
.grip {
    width: 12px;
    height: 12px;
}

/* status bar */
.status {
    display: flex;
    align-items: center;
    height: 34px;
    padding-left: 2px;
    background: #c6c6c6;
}
.ready {
    width: 479px;
}
.faded {
    opacity: .5;
}
.status .combo {
    width: 287px;
}
.status .combo select {
    height: 25px;
    padding: 0 3px;
    border: none;
    background: #f2f2f2;
    color: #777;
}
.status .workset {
    margin: 0 11px 0 10px;
}
.count {
    width: 17px;
    margin-left: 4px;
}
.box {
    margin: 0 13px 0 30px;
}
.status .model {
    margin-left: 10px;
}
.toggles {
    display: flex;
    align-items: center;
    gap: 12px;
    margin-left: auto;
    padding-right: 96px;
}
.toggles svg {
    width: 24px;
    height: 24px;
}
.toggles .count {
    margin-left: -13px;
}

.brand {
    position: absolute;
    right: 27px;
    bottom: 43px;
    display: flex;
    flex-direction: column;
    align-items: center;
    gap: 8px;
    color: #000;
    font: 500 31px/36px Inter, sans-serif;
}
.brand svg {
    width: 70px;
    height: 88px;
}

/* overrides dialog */
.dialog {
    position: absolute;
    left: 417px;
    top: 109px;
    width: 1088px;
    display: flex;
    flex-direction: column;
    padding: 0 11px 11px 10px;
    border: 1px solid #a8a8a8;
    border-radius: 10px;
    background: linear-gradient(#f4f4f4 40px, #efefef 48px);
    box-shadow: 0 14px 60px rgba(0, 0, 0, .4);
    color: #222;
    font-size: 15px;
}
.dlg-head {
    display: flex;
    align-items: center;
    justify-content: space-between;
    height: 42px;
    padding: 0 2px;
    font-size: 16px;
}
.dlg-close svg {
    width: 15px;
    height: 15px;
}
.dlg-tabs {
    display: flex;
    align-items: flex-end;
    height: 40px;
    padding-left: 3px;
}
.dlg-tabs button {
    height: 27px;
    padding: 0 5px;
    border: 1px solid #e2e2e2;
    border-width: 1px 1px 0 0;
    background: #f3f3f3;
}
.dlg-tabs .active {
    height: 30px;
    padding: 0 9px 4px;
    background: #fafafa;
}
.page {
    height: 715px;
    padding: 42px 18px 0 19px;
    border: 1px solid #e0e0e0;
    background: #f9f9f9;
}
.list {
    height: 446px;
    border: 2px solid #787878;
    border-width: 2px 1px 1px 2px;
    border-right-color: #e3e3e3;
    border-bottom-color: #d0d0d0;
    background: #fff;
}
table {
    width: 100%;
    table-layout: fixed;
    border-collapse: collapse;
}
.c-name { width: 207px; }
.c-flag { width: 92px; }
.c-over { width: 103px; }
.c-half { width: 91px; }
th, td {
    padding: 0;
    border: 1px solid #8c8c92;
    white-space: nowrap;
}
th {
    height: 28px;
    border-color: #555;
    border-top: none;
    background: #efefef;
    font-weight: normal;
    line-height: 21px;
}
th.two {
    padding-bottom: 10px;
}
th:first-child[rowspan], td:first-child {
    border-left: none;
}
td {
    height: 25px;
    font-size: 16px;
}
td:first-child {
    padding-left: 9px;
}
td.flag {
    padding-right: 6px;
}
th.fill {
    border-right: none;
}
td.fill {
    border-width: 0 0 0 1px;
    background: #fff;
}
.sel td {
    border-color: #0870d6;
    background: #0870d6;
    color: #fff;
}
.sel td.fill {
    background: #fff;
}
.sel input[type="checkbox"] {
    width: 17px;
    height: 17px;
    border: none;
    border-radius: 3px;
    background: #f3f3f3;
}
.sel input[type="checkbox"]:checked {
    background: #0a5dc0;
}
.sel input[type="checkbox"]:checked::before {
    position: relative;
    top: 2px;
    border-color: #cfe0f5;
    border-width: 0 1px 1px 0;
}
.sel button {
    display: block;
    width: 99px;
    height: 21px;
    margin: 0 auto;
    border-right: 1px solid #999;
    border-bottom: 1px solid #999;
    background: #f0f0f0;
    color: #333;
    line-height: 18px;
}
.list-btns {
    display: flex;
    gap: 12px;
    margin-top: 12px;
}
.list-btns .btn {
    width: 123px;
}
.doc-filters {
    display: flex;
    align-items: center;
    justify-content: space-between;
    width: 527px;
    height: 96px;
    margin: 23px 0 0 3px;
    padding: 0 25px 6px;
    border: 1px solid #dadada;
}
.doc-filters p {
    width: 260px;
    font-size: 14px;
    line-height: 18px;
}
.doc-filters .btn {
    width: 152px;
}
.dlg-foot {
    display: flex;
    justify-content: flex-end;
    gap: 11px;
    padding-top: 11px;
    margin-right: -2px;
}
.dlg-foot .btn {
    width: 103px;
}
.dlg-foot .primary {
    border: 2px solid #2e6fc4;
}
.dialog .grip {
    position: absolute;
    right: 2px;
    bottom: 1px;
}
.cursor {
    position: absolute;
    left: 932px;
    top: 234px;
    width: 16px;
    height: 24px;
}
```
